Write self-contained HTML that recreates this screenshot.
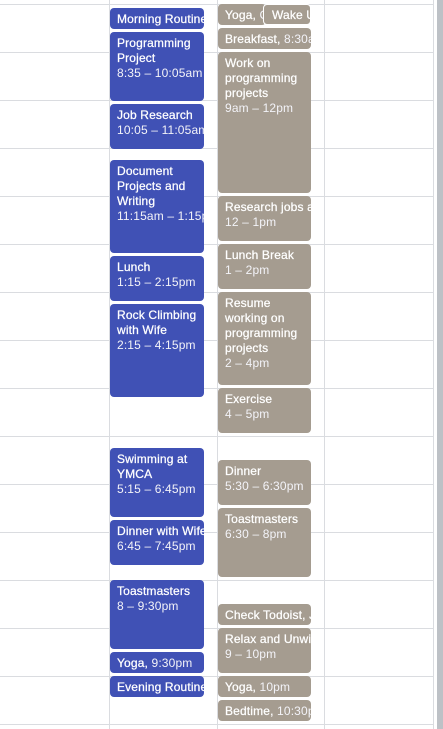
<!DOCTYPE html>
<html><head><meta charset="utf-8"><style>
body{margin:0;width:443px;height:729px;overflow:hidden;background:#fff;position:relative;font-family:"Liberation Sans",Arial,sans-serif;}
.h{position:absolute;left:0;width:433px;height:1px;background:#dadce0}
.v{position:absolute;top:0;height:729px;width:1px;background:#dadce0}
.sb{position:absolute;left:437px;top:0;width:6px;height:729px;background:#bdc1c6}
.e{position:absolute;color:#fff;font-size:12px;line-height:15px;padding:4px 0 0 7px;box-sizing:border-box;border-radius:4px;overflow:hidden;white-space:nowrap;font-weight:normal;letter-spacing:0.15px;-webkit-text-stroke:0.25px #fff}
.e span{-webkit-text-stroke:0;color:#f3f3f8}
.b{background:#4051b5;left:110px;width:94px}
.g{background:#a59c90;left:218px;width:93px}
</style></head><body>
<div class="h" style="top:4px"></div><div class="h" style="top:52px"></div><div class="h" style="top:100px"></div><div class="h" style="top:148px"></div><div class="h" style="top:196px"></div><div class="h" style="top:244px"></div><div class="h" style="top:292px"></div><div class="h" style="top:340px"></div><div class="h" style="top:388px"></div><div class="h" style="top:436px"></div><div class="h" style="top:484px"></div><div class="h" style="top:532px"></div><div class="h" style="top:580px"></div><div class="h" style="top:628px"></div><div class="h" style="top:676px"></div><div class="h" style="top:724px"></div>
<div class="v" style="left:109px"></div><div class="v" style="left:217px"></div><div class="v" style="left:324px"></div><div class="v" style="left:433px"></div>
<div class="sb"></div>

<div class="e b" style="top:8px;height:21px">Morning Routine</div>
<div class="e b" style="top:32px;height:69px">Programming<br>Project<br><span>8:35 – 10:05am</span></div>
<div class="e b" style="top:104px;height:45px">Job Research<br><span>10:05 – 11:05am</span></div>
<div class="e b" style="top:160px;height:93px">Document<br>Projects and<br>Writing<br><span>11:15am – 1:15pm</span></div>
<div class="e b" style="top:256px;height:45px">Lunch<br><span>1:15 – 2:15pm</span></div>
<div class="e b" style="top:304px;height:93px">Rock Climbing<br>with Wife<br><span>2:15 – 4:15pm</span></div>
<div class="e b" style="top:448px;height:69px">Swimming at<br>YMCA<br><span>5:15 – 6:45pm</span></div>
<div class="e b" style="top:520px;height:45px">Dinner with Wife<br><span>6:45 – 7:45pm</span></div>
<div class="e b" style="top:580px;height:69px">Toastmasters<br><span>8 – 9:30pm</span></div>
<div class="e b" style="top:652px;height:21px">Yoga, <span>9:30pm</span></div>
<div class="e b" style="top:676px;height:21px">Evening Routine</div>

<div class="e g" style="top:4px;height:21px;width:48px">Yoga, <span>C</span></div>
<div class="e g" style="top:4px;height:21px;left:263px;width:48px;border:1px solid #fff;padding-left:8px;padding-top:3px">Wake Up</div>
<div class="e g" style="top:28px;height:21px">Breakfast, <span>8:30am</span></div>
<div class="e g" style="top:52px;height:141px">Work on<br>programming<br>projects<br><span>9am – 12pm</span></div>
<div class="e g" style="top:196px;height:45px">Research jobs and<br><span>12 – 1pm</span></div>
<div class="e g" style="top:244px;height:45px">Lunch Break<br><span>1 – 2pm</span></div>
<div class="e g" style="top:292px;height:93px">Resume<br>working on<br>programming<br>projects<br><span>2 – 4pm</span></div>
<div class="e g" style="top:388px;height:45px">Exercise<br><span>4 – 5pm</span></div>
<div class="e g" style="top:460px;height:45px">Dinner<br><span>5:30 – 6:30pm</span></div>
<div class="e g" style="top:508px;height:69px">Toastmasters<br><span>6:30 – 8pm</span></div>
<div class="e g" style="top:604px;height:21px">Check Todoist, J</div>
<div class="e g" style="top:628px;height:45px">Relax and Unwind<br><span>9 – 10pm</span></div>
<div class="e g" style="top:676px;height:21px">Yoga, <span>10pm</span></div>
<div class="e g" style="top:700px;height:21px">Bedtime, <span>10:30pm</span></div>
</body></html>
